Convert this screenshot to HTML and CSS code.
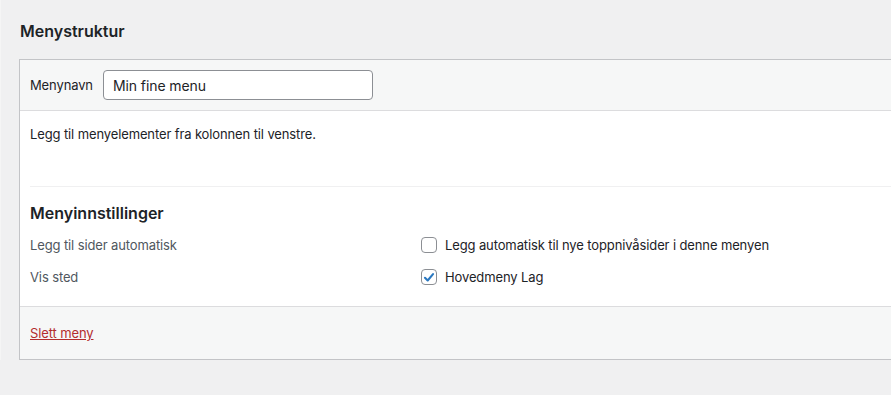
FILE: index.html
```html
<!DOCTYPE html>
<html lang="no">
<head>
<meta charset="utf-8">
<title>Menystruktur</title>
<link rel="stylesheet" href="styles.css">
</head>
<body>
<div class="page">
  <h2 class="title">Menystruktur</h2>
  <div class="menu-box">
    <div class="menu-header">
      <label class="name-label" for="menu-name">Menynavn</label>
      <input class="name-input" id="menu-name" type="text" value="Min fine menu">
    </div>
    <div class="menu-body">
      <p class="hint">Legg til menyelementer fra kolonnen til venstre.</p>
      <div class="separator"></div>
      <h3 class="settings-title">Menyinnstillinger</h3>
      <div class="settings">
        <div class="setting-label">Legg til sider automatisk</div>
        <div class="setting-value">
          <span class="check"></span>
          <span class="check-text">Legg automatisk til nye toppnivåsider i denne menyen</span>
        </div>
        <div class="setting-label">Vis sted</div>
        <div class="setting-value">
          <span class="check checked"><svg viewBox="0 0 16 16" width="15" height="15"><path d="M3.4 8.3 L6.5 11.4 L12.6 4.2" fill="none" stroke="#2a78c0" stroke-width="2.4" stroke-linecap="round" stroke-linejoin="round"/></svg></span>
          <span class="check-text">Hovedmeny Lag</span>
        </div>
      </div>
    </div>
    <div class="menu-footer">
      <a class="delete" href="#">Slett meny</a>
    </div>
  </div>
</div>
</body>
</html>
```
FILE: styles.css
```css
html, body {
  margin: 0;
  padding: 0;
}
body {
  background: #f0f0f1;
  font-family: "Inter", "Liberation Sans", sans-serif;
  font-size: 13px;
  letter-spacing: -0.12px;
  color: #1d2327;
  overflow: hidden;
  border-left: 1px solid #f5f5f5;
}
.page {
  padding: 22px 0 0 18px;
}
.title {
  margin: 0 0 18px 1px;
  font-size: 16px;
  font-weight: 600;
  line-height: 19px;
  letter-spacing: 0;
  color: #1d2327;
}
.menu-box {
  width: 900px;
  border: 1px solid #c3c4c7;
  background: #fff;
}
.menu-header {
  height: 50px;
  display: flex;
  align-items: center;
  padding: 0 10px;
  background: #f6f7f7;
  border-bottom: 1px solid #dcdcde;
}
.name-label {
  width: 73px;
  color: #1d2327;
}
.name-input {
  box-sizing: border-box;
  width: 270px;
  height: 30px;
  margin: 0;
  padding: 0 9px;
  border: 1px solid #8c8f94;
  border-radius: 4px;
  font-family: inherit;
  font-size: 14px;
  letter-spacing: -0.1px;
  color: #1d2327;
  background: #fff;
}
.menu-body {
  padding: 15px 0 0 10px;
  height: 180px;
}
.hint {
  margin: 0;
  line-height: 17px;
  color: #1d2327;
}
.separator {
  margin-top: 43px;
  border-top: 1px solid #f0f0f1;
}
.settings-title {
  margin: 16px 0 0 0;
  font-size: 16px;
  font-weight: 600;
  line-height: 20px;
  letter-spacing: 0;
}
.settings {
  margin-top: 6px;
  display: grid;
  grid-template-columns: 391px 1fr;
  grid-auto-rows: 32px;
  align-items: center;
}
.setting-label {
  color: #50575e;
}
.setting-value {
  display: flex;
  align-items: center;
}
.check {
  box-sizing: border-box;
  width: 16px;
  height: 16px;
  border: 1px solid #8c8f94;
  border-radius: 4px;
  background: #fff;
  display: flex;
  align-items: center;
  justify-content: center;
  margin-right: 8px;
}
.check-text {
  color: #1d2327;
}
.menu-footer {
  height: 52px;
  background: #f6f7f7;
  border-top: 1px solid #dcdcde;
  display: flex;
  align-items: center;
  padding: 0 10px;
}
.delete {
  color: #b32d2e;
  text-decoration: underline;
}
```
